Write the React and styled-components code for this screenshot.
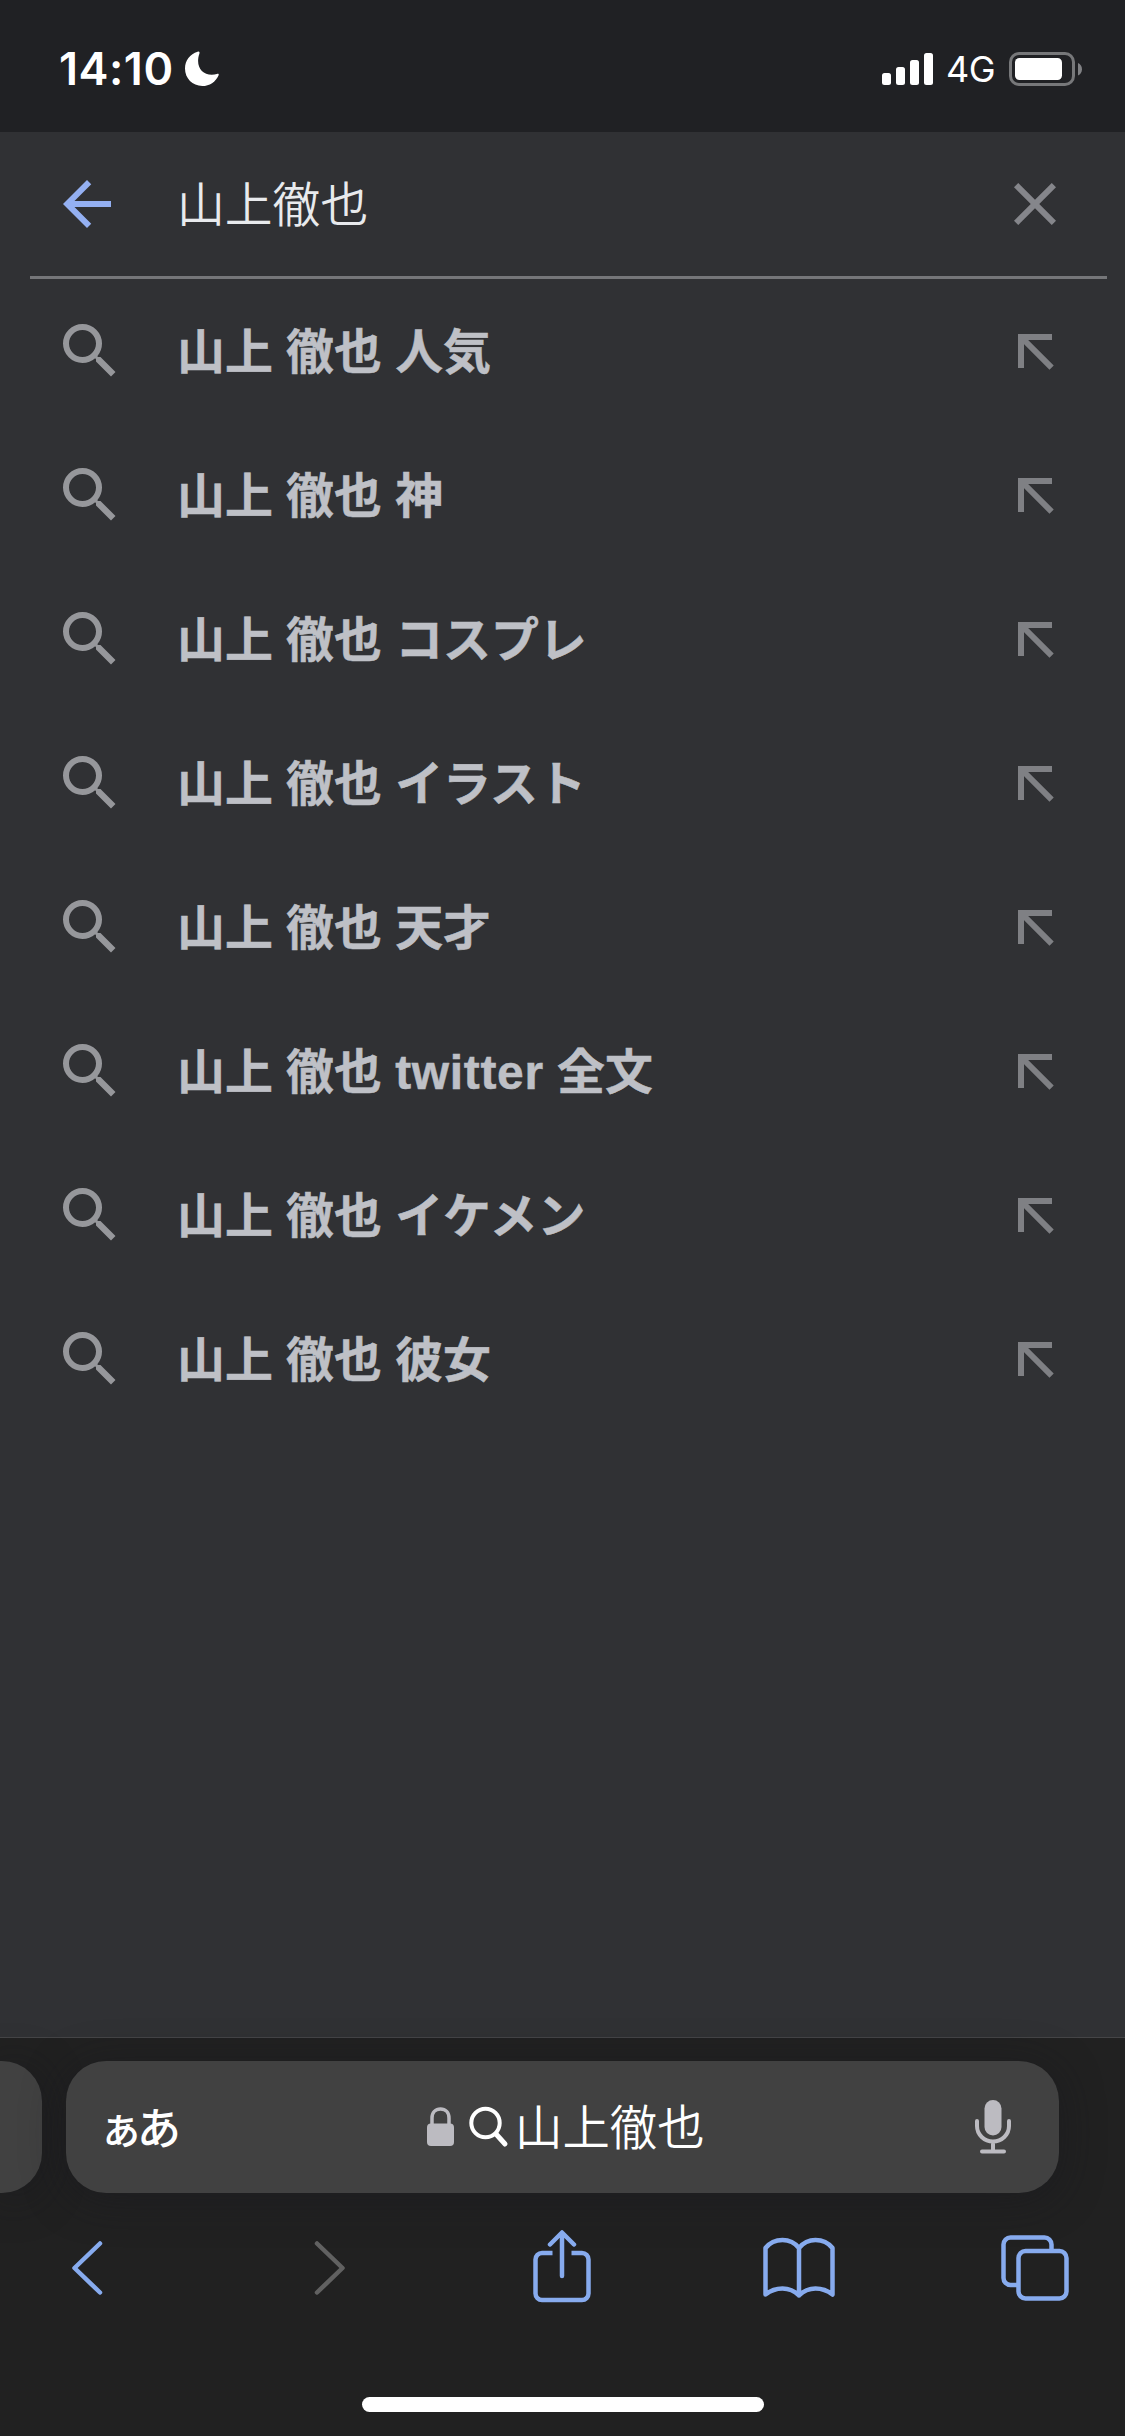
import React, {useState} from 'react';
import styled, {createGlobalStyle} from 'styled-components';

const SUGGESTIONS = [
    "山上 徹也 人気",
    "山上 徹也 神",
    "山上 徹也 コスプレ",
    "山上 徹也 イラスト",
    "山上 徹也 天才",
    "山上 徹也 twitter 全文",
    "山上 徹也 イケメン",
    "山上 徹也 彼女",
];

function StatusBar() {
    return (
        <Status>
            <Clock>14:10</Clock>
            <svg className="moon" width="36" height="36" viewBox="0 0 36 36" fill="#fff">
                <path d="M13.6.8C6 3.200 1 9.500 1 17.600 1 27.500 8.500 35 18.300 35c7.200 0 13.400-4.200 16.200-10.600.7-1.500-.2-2-1.600-1.500-1.500.5-3.300.8-5.100.8-8.200 0-13.700-5.500-13.700-13.700 0-2.600.4-5 1.300-7.300C15.900 1.200 15.200.2 13.600.8z" />
            </svg>
            <svg className="signal" width="51" height="34" viewBox="0 0 51 34" fill="#fff">
                <rect x="0" y="21" width="9" height="12" rx="2.500" />
                <rect x="14" y="15" width="9" height="18" rx="2.500" />
                <rect x="28" y="8" width="9" height="25" rx="2.500" />
                <rect x="42" y="1" width="9" height="32" rx="2.500" />
            </svg>
            <Network>4G</Network>
            <svg width="74" height="34" viewBox="0 0 74 34">
                <rect x="1.500" y="1.500" width="63" height="31" rx="8.500" fill="none" stroke="#77787a" strokeWidth="3" />
                <rect x="6" y="6" width="47" height="22" rx="4.500" fill="#fff" />
                <path d="M69 11v12.500c2.500-1 4-3.500 4-6.250S71.500 12 69 11z" fill="#808184" />
            </svg>
        </Status>
    )
}

function Suggestion({text, onSelect}) {
    return (
        <Row onClick={onSelect}>
            <svg width="72" height="72" viewBox="0 0 24 24" fill="#96979b">
                <path d="M15.500 14h-.79l-.28-.27A6.471 6.471 0 0 0 16 9.500 6.500 6.500 0 1 0 9.500 16c1.610 0 3.090-.59 4.230-1.570l.27.28v.79l5 4.990L20.490 19l-4.990-5zm-6 0C7.010 14 5 11.990 5 9.500S7.010 5 9.500 5 14 7.010 14 9.500 11.990 14 9.500 14z" />
            </svg>
            <span className="label">
                {text.split(/([a-z]+)/).map((part, i) => i % 2 ? <Latin key={i}>{part}</Latin> : part)}
            </span>
            <svg className="fill-in" width="36" height="36" viewBox="0 0 36 36" fill="none" stroke="#7f8084" strokeWidth="6">
                <path d="M34 3H3v31M4 4l29.600 29.600" />
            </svg>
        </Row>
    )
}

function Toolbar() {
    return (
        <Nav>
            <svg className="back" width="32" height="56" viewBox="0 0 32 56" stroke="#87abee">
                <path d="M29 3.500 3.500 28 29 52.500" />
            </svg>
            <svg className="forward" width="32" height="56" viewBox="0 0 32 56" stroke="#616161">
                <path d="M3 3.500 28.500 28 3 52.500" />
            </svg>
            <svg className="share" width="58" height="74" viewBox="0 0 58 74" stroke="#87abee">
                <path d="M19.500 23H9a6.500 6.500 0 0 0-6.500 6.500v34A6.500 6.500 0 0 0 9 70h40a6.500 6.500 0 0 0 6.500-6.500v-34A6.500 6.500 0 0 0 49 23H38.500" strokeLinecap="butt" />
                <path d="M29 46V3.500M17 14.500 29 2.500l12 12" />
            </svg>
            <svg className="book" width="72" height="62" viewBox="0 0 72 62" stroke="#87abee">
                <path d="M36 11C32 6 26 3 19.500 3S6.500 6 2.500 11v46.500C7 54 13 51.500 19.500 51.500S31.500 54 36 58.500C40.500 54 46 51.500 52.500 51.500S65 54 69.500 57.500V11C65.500 6 59 3 52.500 3S40 6 36 11zM36 11v47.500" />
            </svg>
            <svg className="tabs" width="68" height="66" viewBox="0 0 68 66" stroke="#87abee">
                <rect x="17.500" y="16" width="48" height="47.500" rx="7" />
                <path d="M50.500 16V9.500a7 7 0 0 0-7-7H9.500a7 7 0 0 0-7 7V43a7 7 0 0 0 7 7h8" strokeLinecap="butt" />
            </svg>
        </Nav>
    )
}

function App() {
    const [query, setQuery] = useState("山上徹也");

    return (
        <Page>
            <GlobalStyle />
            <StatusBar />
            <SearchHeader>
                <svg width="72" height="72" viewBox="0 0 24 24" fill="#94b0f2">
                    <path d="M20 11H7.830l5.590-5.590L12 4l-8 8 8 8 1.410-1.410L7.830 13H20v-2z" />
                </svg>
                <input className="query" value={query} onChange={(e) => setQuery(e.target.value)} />
                <svg width="72" height="72" viewBox="0 0 24 24" fill="#85868b" onClick={() => setQuery("")}>
                    <path d="M19 6.410 17.590 5 12 10.590 6.410 5 5 6.410 10.590 12 5 17.590 6.410 19 12 13.410 17.590 19 19 17.590 13.410 12z" />
                </svg>
            </SearchHeader>
            <List>
                {SUGGESTIONS.map(text => (
                    <Suggestion key={text} text={text} onSelect={() => setQuery(text)} />
                ))}
            </List>
            <Browser>
                <Tabs>
                    <PreviousTab />
                    <AddressBar>
                        <span className="reader"><small>ぁ</small>あ</span>
                        <div className="address">
                            <svg width="27" height="40" viewBox="0 0 27 40">
                                <path d="M5 18v-7C5 5.500 8.500 2 13.500 2S22 5.500 22 11v7" fill="none" stroke="#bcbbc1" strokeWidth="3.500" />
                                <rect x="0" y="16.500" width="27" height="22.500" rx="4" fill="#bcbbc1" />
                            </svg>
                            <svg className="glass" width="40" height="42" viewBox="0 0 40 42" fill="none" stroke="#fff">
                                <circle cx="16.500" cy="17" r="14.200" strokeWidth="4" />
                                <path d="m27 28 9 10" strokeWidth="5" strokeLinecap="round" />
                            </svg>
                            <span className="url">山上徹也</span>
                        </div>
                        <svg width="36" height="54" viewBox="0 0 36 54" fill="none" stroke="#bcbbc1" strokeWidth="4" strokeLinecap="round">
                            <rect x="9.500" y="0" width="17" height="35.500" rx="8.500" fill="#bcbbc1" stroke="none" />
                            <path d="M2 21v5a16 15.500 0 0 0 32 0v-5M18 42v9M7 51.500h22" />
                        </svg>
                    </AddressBar>
                </Tabs>
                <Toolbar />
                <HomeIndicator />
            </Browser>
        </Page>
    )
}

const GlobalStyle = createGlobalStyle`
  body {
    margin: 0;
    background: #303134;
  }
  svg {
    display: block;
    flex-shrink: 0;
  }
`;

const Page = styled.div`
  display: flex;
  flex-direction: column;
  width: 1125px;
  height: 2436px;
  overflow: hidden;
  background: #303134;
  font-family: "Liberation Sans", "Noto Sans CJK JP", sans-serif;
`;

const Status = styled.div`
  display: flex;
  align-items: center;
  box-sizing: border-box;
  height: 132px;
  padding: 6px 42px 0 59px;
  background: #202124;
  color: #fff;
  font-family: Inter, sans-serif;

  .moon {
    margin-left: 11px;
  }
  .signal {
    margin-left: auto;
  }
`;

const Clock = styled.span`
  width: 114px;
  font-size: 45px;
  font-weight: 600;
  line-height: 54px;
  letter-spacing: .5px;
  white-space: nowrap;
`;

const Network = styled.span`
  width: 63px;
  margin-left: 13px;
  font-size: 36px;
  line-height: 46px;
  letter-spacing: -.5px;
`;

const SearchHeader = styled.div`
  display: flex;
  align-items: center;
  height: 144px;
  margin: 0 18px 0 30px;
  padding: 0 36px 0 21px;
  border-bottom: 3px solid #757679;

  .query {
    flex: 1;
    min-width: 0;
    height: 72px;
    margin: 0 0 5px 54px;
    padding: 0;
    border: 0;
    outline: 0;
    background: none;
    color: #e8eaed;
    font-family: "Noto Sans CJK JP", sans-serif;
    font-size: 47.800px;
    font-weight: 350;
    line-height: 72px;
  }
`;

const List = styled.div`
  flex: 1;
`;

const Row = styled.div`
  display: flex;
  align-items: center;
  height: 144px;
  padding: 0 71px 0 54px;

  .label {
    flex: 1;
    margin-left: 51px;
    padding-top: 3px;
    color: #bec0c6;
    font-size: 47.900px;
    font-weight: 700;
    line-height: 72px;
    white-space: nowrap;
    -webkit-text-stroke: .5px #bec0c6;
  }
  .fill-in {
    margin-top: 2px;
  }
`;

const Latin = styled.span`
  letter-spacing: .7px;
`;

const Browser = styled.div`
  box-sizing: border-box;
  height: 399px;
  border-top: 1px solid #454547;
  background: #212121;
`;

const Tabs = styled.div`
  display: flex;
  gap: 24px;
  padding-top: 23px;
`;

const PreviousTab = styled.div`
  width: 42px;
  height: 132px;
  border-radius: 0 40px 40px 0;
  background: #414141;
  box-shadow: 0 6px 40px rgba(24, 24, 30, .5);
`;

const AddressBar = styled.div`
  display: flex;
  align-items: center;
  box-sizing: border-box;
  width: 993px;
  height: 132px;
  padding: 0 48px 0 33px;
  border-radius: 40px;
  background: #414141;
  box-shadow: 0 6px 40px rgba(24, 24, 30, .5);
  color: #fff;
  font-family: "Noto Sans CJK JP", sans-serif;

  .reader {
    width: 328px;
    padding-bottom: 3px;
    font-size: 44px;
    font-weight: 500;
    line-height: 64px;
  }
  .reader small {
    font-size: 44px;
    letter-spacing: -6px;
  }
  .address {
    display: flex;
    flex: 1;
    align-items: center;
  }
  .glass {
    margin: 0 6px 0 15px;
  }
  .url {
    padding-bottom: 4px;
    font-size: 47.400px;
    font-weight: 350;
    line-height: 72px;
  }
`;

const Nav = styled.div`
  display: grid;
  grid-template-columns: repeat(5, 237px);
  align-items: center;
  justify-items: center;
  height: 150px;
  margin: 0 -30px;

  svg {
    fill: none;
    stroke-width: 4.500;
    stroke-linecap: round;
    stroke-linejoin: round;
  }
  .back,
  .tabs {
    margin-right: 4px;
  }
  .forward {
    margin-left: 9px;
  }
  .share {
    margin: 0 1px 2px 0;
  }
  .book {
    margin-right: 2px;
  }
`;

const HomeIndicator = styled.div`
  width: 402px;
  height: 15px;
  margin: 54px auto 0;
  border-radius: 8px;
  background: #fff;
`;

export default App;
